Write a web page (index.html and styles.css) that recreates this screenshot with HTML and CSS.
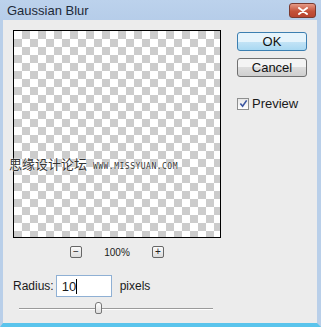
FILE: index.html
```html
<!DOCTYPE html>
<html lang="en">
<head>
  <meta charset="UTF-8">
  <title>Gaussian Blur</title>
  <link rel="stylesheet" href="styles.css">
</head>
<body>
  <div class="window">
    <header class="titlebar">
      <span class="title">Gaussian Blur</span>
      <button class="close-btn" aria-label="Close">
        <svg viewBox="0 0 10 8" width="10" height="8">
          <path d="M1 1 L9 7 M9 1 L1 7" stroke="#fff" stroke-width="2" stroke-linecap="round"/>
        </svg>
      </button>
    </header>

    <div class="client">
      <div class="left">
        <div class="preview"></div>
        <div class="zoom-row">
          <span class="zbtn">&minus;</span>
          <span class="zoom-val">100%</span>
          <span class="zbtn">+</span>
        </div>
        <div class="radius-row">
          <label class="radius-label">Radius:</label>
          <div class="field">10<span class="caret"></span></div>
          <span>pixels</span>
        </div>
        <div class="slider">
          <div class="track"></div>
          <div class="thumb"></div>
        </div>
      </div>

      <div class="right">
        <button class="btn btn-ok">OK</button>
        <button class="btn">Cancel</button>
        <label class="check">
          <span class="box">
            <svg viewBox="0 0 10 10" width="9" height="9">
              <path d="M1.5 5 L4 8 L8.5 1.5" fill="none" stroke="#3a55a0" stroke-width="1.8"/>
            </svg>
          </span>
          Preview
        </label>
      </div>
    </div>

    <div class="watermark">思缘设计论坛 <span class="wm-url">WWW.MISSYUAN.COM</span></div>
  </div>
</body>
</html>
```

FILE: styles.css
```css
* { box-sizing: border-box; margin: 0; padding: 0; }
body {
  background: #ececec;
  font-family: "Liberation Sans", "Noto Sans CJK SC", sans-serif;
  font-size: 12px;
  color: #1a1a1a;
}

.window {
  position: relative;
  width: 321px;
  height: 327px;
  background: #ececec;
  border-left: 3px solid #b9cfe9;
  border-right: 4px solid #b9cfe9;
  border-bottom: 4px solid #5ac4ec;
  display: flex;
  flex-direction: column;
}

.titlebar {
  height: 20px;
  margin: 0 -4px 0 -3px;
  display: flex;
  align-items: center;
  justify-content: space-between;
  padding: 0 5px 0 7px;
  background: linear-gradient(#bcd2ec, #b6cde9);
}
.title {
  font-size: 13px;
  color: #1e2a38;
}
.close-btn {
  width: 27px;
  height: 15px;
  margin-top: 1px;
  border: 1px solid #7a3a30;
  border-radius: 3px;
  background: linear-gradient(#e59a87, #c4523a 55%, #b84430);
  display: flex;
  align-items: center;
  justify-content: center;
}

.client {
  flex: 1;
  display: flex;
  padding: 10px 0 0 10px;
}
.left {
  width: 208px;
  display: flex;
  flex-direction: column;
}

.preview {
  width: 208px;
  height: 208px;
  border: 1px solid #000;
  background-color: #fff;
  background-image: conic-gradient(#cccccc 0 25%, #fff 0 50%, #cccccc 0 75%, #fff 0);
  background-size: 16px 16px;
}

.zoom-row {
  display: flex;
  align-items: center;
  height: 22px;
  margin-top: 3px;
  padding-left: 57px;
  font-size: 10px;
}
.zbtn {
  width: 12px;
  height: 12px;
  border: 1px solid #666;
  border-radius: 2px;
  background: linear-gradient(#fafafa, #dcdcdc);
  font-size: 10px;
  line-height: 10px;
  text-align: center;
  color: #222;
}
.zoom-val {
  width: 70px;
  text-align: center;
}

.radius-row {
  display: flex;
  align-items: center;
  margin-top: 12px;
  font-size: 12px;
}
.radius-label {
  margin-right: 2px;
}
.field {
  width: 56px;
  height: 22px;
  border: 1px solid #8fb0d4;
  background: #fff;
  padding: 3px 0 0 5px;
  margin-right: 8px;
  font-size: 13px;
}
.caret {
  display: inline-block;
  width: 1px;
  height: 15px;
  background: #000;
  vertical-align: top;
}

.slider {
  position: relative;
  height: 14px;
  margin: 5px 0 0 6px;
  width: 194px;
}
.track {
  margin-top: 6px;
  height: 2px;
  border-top: 1px solid #9a9a9a;
  border-bottom: 1px solid #fff;
}
.thumb {
  position: absolute;
  left: 76px;
  top: 0;
  width: 7px;
  height: 12px;
  border: 1px solid #777;
  border-radius: 3px 3px 2px 2px;
  background: linear-gradient(#fff, #ddd);
}

.right {
  display: flex;
  flex-direction: column;
  padding: 2px 0 0 16px;
}
.btn {
  width: 70px;
  height: 19px;
  margin-bottom: 7px;
  border: 1px solid #707070;
  border-radius: 3px;
  background: linear-gradient(#f4f4f4 50%, #dddddd 50%, #cfcfcf);
  font-family: inherit;
  font-size: 13px;
  color: #111;
}
.btn-ok {
  border-color: #3c7fb1;
  background: linear-gradient(#e6f4fc 50%, #c4e4f6 50%, #a9d8f2);
}
.check {
  display: flex;
  align-items: center;
  gap: 3px;
  margin-top: 12px;
  font-size: 13px;
}
.box {
  width: 12px;
  height: 12px;
  border: 1px solid #8e8f8f;
  background: linear-gradient(#e8e8e8, #fff);
  display: flex;
  align-items: center;
  justify-content: center;
}

.watermark {
  position: absolute;
  left: 6px;
  top: 154px;
  font-family: "Noto Sans CJK SC", sans-serif;
  font-size: 13px;
  color: #333;
  text-shadow: 0 0 2px #fff, 0 0 1px #fff;
}
.wm-url {
  font-family: "DejaVu Sans Mono", monospace;
  font-size: 8px;
  letter-spacing: 0.5px;
  margin-left: 3px;
}
```
